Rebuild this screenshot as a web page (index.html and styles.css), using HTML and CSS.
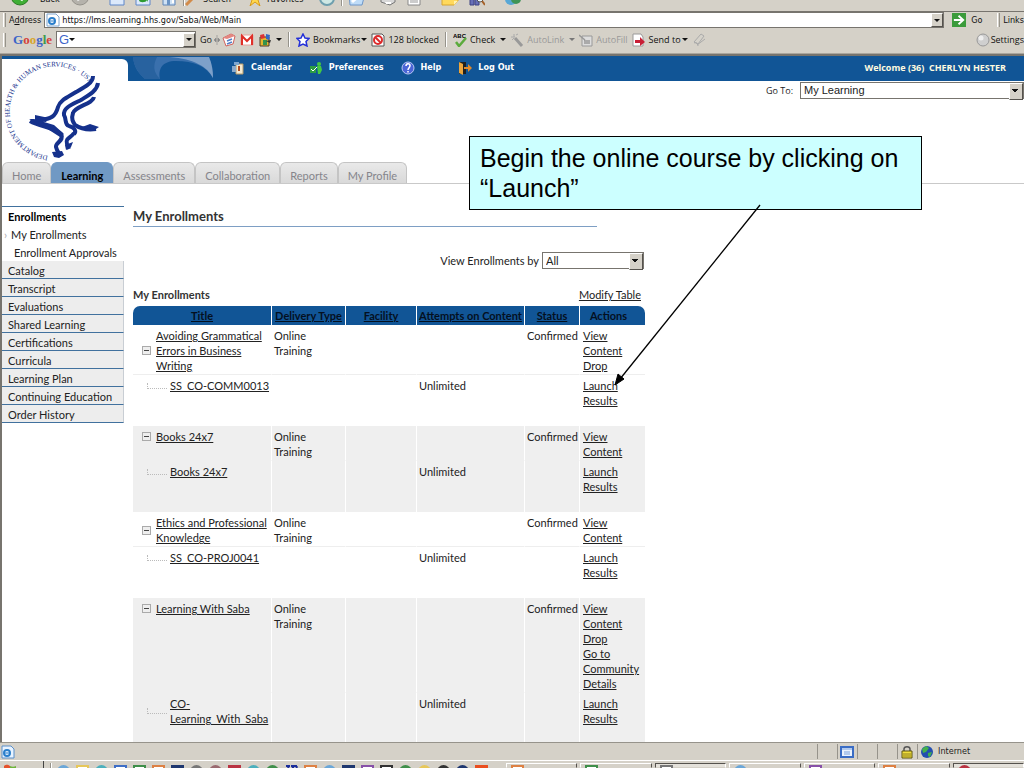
FILE: index.html
```html
<!DOCTYPE html>
<html lang="en">
<head>
  <meta charset="UTF-8">
  <meta name="viewport" content="width=device-width, initial-scale=1.0">
  <title>My Enrollments</title>
  <link rel="stylesheet" href="styles.css">
</head>
<body>

  <!-- browser toolbars -->
  <div class="chrome">
    <div class="std-bar">
      <svg class="big" viewBox="0 0 20 20"><circle cx="10" cy="10" r="9" fill="#3fae35" stroke="#2a7a24"/><path d="M13 6l-6 4 6 4" fill="none" stroke="#fff" stroke-width="3"/></svg>
      <span class="std-text back">Back</span>
      <svg class="big" viewBox="0 0 20 20"><circle cx="10" cy="10" r="9" fill="#b5b2ab" stroke="#96938c"/><path d="M7 6l6 4-6 4" fill="none" stroke="#eee" stroke-width="3"/></svg>
      <svg class="first" viewBox="0 0 16 16"><path d="M1 0h14v15H1z" fill="#dce9fb" stroke="#5f86c8"/><path d="M4 1l8 8m0-8l-8 8" stroke="#d33" stroke-width="2"/></svg>
      <svg viewBox="0 0 16 16"><path d="M1 0h14v15H1z" fill="#dce9fb" stroke="#5f86c8"/><path d="M4 10c0 3 7 3 8 0l1 2V7H8l2 2c-2 1-3 0-3-2H4z" fill="#2d9b32"/></svg>
      <svg viewBox="0 0 16 16"><path d="M2 6l6-5 6 5v9H2z" fill="#cfe2f5" stroke="#5f86b8"/><path d="M6 9h3v6H6z" fill="#6b94c4"/><path d="M11 8h2v5h-2z" fill="#fff"/></svg>
      <span class="sep"></span>
      <svg class="glass" viewBox="0 0 16 16"><circle cx="10" cy="5" r="4" fill="#d8ecfa" stroke="#7893ab"/><path d="M7 9l-6 6" stroke="#d28b4a" stroke-width="3"/></svg>
      <span class="std-text search">Search</span>
      <svg viewBox="0 0 16 16"><path d="M8 0l2 5 6 1-5 4 2 6-5-4-5 4 2-6-5-4 6-1z" fill="#ffd84d" stroke="#d79a1a"/></svg>
      <span class="std-text fav">Favorites</span>
      <svg viewBox="0 0 16 16"><circle cx="8" cy="8" r="7" fill="#cfe8e4" stroke="#6e9fae" stroke-width="2"/><path d="M8 3v6h4" fill="none" stroke="#2c7f3c" stroke-width="2"/></svg>
      <span class="sep"></span>
      <svg viewBox="0 0 16 16"><path d="M0 4h16L13 15H1z" fill="#bfdcf7" stroke="#6c96c9"/><path d="M3 12l9-8" stroke="#fff" stroke-width="3"/></svg>
      <svg class="wide-left" viewBox="0 0 16 16"><path d="M1 5h14v7l-5 3-9-3z" fill="#d8d8d8" stroke="#777"/><path d="M5 12h6v2H6z" fill="#fff"/></svg>
      <svg viewBox="0 0 16 16"><path d="M2 0h12v15H2z" fill="#fff" stroke="#888"/><path d="M4 10h8M4 12h8" stroke="#999"/></svg>
      <svg class="note" viewBox="0 0 18 16"><path d="M1 2h16v9l-4 4H1z" fill="#ffd95c" stroke="#d6a530"/><path d="M13 15v-4h4" fill="#fff2b0"/></svg>
      <svg viewBox="0 0 16 16"><path d="M1 1h4v14H1zM6 1h4v14H6z" fill="#6870b8" stroke="#3d4283"/><circle cx="11" cy="9" r="3" fill="#e4f2fa" stroke="#555"/><path d="M13 11l3 4" stroke="#a5622a" stroke-width="2"/></svg>
      <svg class="note" viewBox="0 0 16 16"><circle cx="6" cy="9" r="6" fill="#58a7d6"/><circle cx="11" cy="9" r="5" fill="#3f9457"/></svg>
    </div>

    <div class="address-bar">
      <span class="grip"></span>
      <label for="address">A<u>d</u>dress</label>
      <div class="address-box">
        <svg viewBox="0 0 14 14"><path d="M1 1h9l3 3v9H1z" fill="#fff" stroke="#7fa6cf"/><circle cx="6" cy="8" r="3" fill="none" stroke="#2b7fcb" stroke-width="2"/><path d="M3 8h6" stroke="#2b7fcb"/></svg>
        <input id="address" type="text" value="https://lms.learning.hhs.gov/Saba/Web/Main">
        <button class="drop" aria-label="Address history"></button>
      </div>
      <button class="go-btn">
        <svg viewBox="0 0 15 15"><path d="M0 0h15v15H0z" fill="#3b9b3b"/><path d="M2 7.500h9M7 3l5 4.500L7 12" fill="none" stroke="#fff" stroke-width="2"/></svg>
        Go
      </button>
      <span class="grip"></span>
      <span class="links">Links</span>
    </div>

    <div class="google-bar">
      <span class="grip"></span>
      <span class="google"><b class="g-blue">G</b><b class="g-red">o</b><b class="g-yellow">o</b><b class="g-blue">g</b><b class="g-green">l</b><b class="g-red">e</b></span>
      <div class="google-box">
        <span class="g-mark">G</span><span class="caret"></span>
        <input type="text" aria-label="Google search">
        <button class="drop" aria-label="Search history"></button>
      </div>
      <button class="tool">Go</button>
      <svg class="tiny" viewBox="0 0 6 10"><path d="M3 0v10M0 5l2-2v4zM6 5L4 3v4z" fill="#888" stroke="#888" stroke-width=".6"/></svg>
      <svg class="ic14" viewBox="0 0 14 14"><path d="M1 5l8-4 4 2-2 8-7 2z" fill="#fff" stroke="#d0605c"/><path d="M1 5l8-4 4 2-8 3z" fill="#e48680"/><path d="M5 8l5-2M5 11l5-2" stroke="#547fc4" stroke-width="1.500"/></svg>
      <svg class="ic14" viewBox="0 0 14 12"><path d="M1 1h12v10H1z" fill="#fff" stroke="#e8a09b"/><path d="M2 11V2l5 5 5-5v9" fill="none" stroke="#df2f28" stroke-width="2"/></svg>
      <svg class="ic14" viewBox="0 0 14 14"><path d="M2 4h9v9H2z" fill="#e7b62e" stroke="#4a3b26"/><path d="M2 2l4-1 1 4-4 1z" fill="#d33"/><path d="M8 1l4 1-1 5-3-1z" fill="#3568c5"/><path d="M5 7h4v5H5z" fill="#35934b"/><path d="M8 8l5-1-1 3z" fill="#333"/></svg>
      <span class="caret"></span>
      <span class="sep tall"></span>
      <button class="tool"><svg class="ic14" viewBox="0 0 14 14"><path d="M7 1l2 4 4 .500-3 3 1 4.500-4-2-4 2 1-4.500-3-3L5 5z" fill="#fff" stroke="#2430d8" stroke-width="1.500"/></svg>Bookmarks<i class="caret"></i></button>
      <button class="tool"><svg class="ic14" viewBox="0 0 14 14"><path d="M1 1h10l2 2v10H1z" fill="#fff" stroke="#555"/><circle cx="7" cy="7" r="4" fill="#fff" stroke="#dc2b2b" stroke-width="2"/><path d="M4 4l6 6" stroke="#dc2b2b" stroke-width="2"/></svg>128 blocked</button>
      <span class="sep tall"></span>
      <button class="tool"><svg class="ic14" viewBox="0 0 14 14"><text x="0" y="5" class="abc">ABC</text><path d="M3 9l3 4 7-8" fill="none" stroke="#5bab3d" stroke-width="2.500"/></svg>Check<i class="caret spaced"></i></button>
      <button class="tool off"><svg class="ic14" viewBox="0 0 14 14"><path d="M5 5l7 8" stroke="#999" stroke-width="3"/><path d="M1 4h4M4 1v3M2 7l2-2M6 2l2-1" stroke="#aaa"/></svg>AutoLink<i class="caret spaced"></i></button>
      <button class="tool off"><svg class="ic14" viewBox="0 0 14 14"><path d="M3 3h10v10H3z" fill="#ddd" stroke="#999"/><path d="M5 8h6M5 10h6M0 2l6 5" stroke="#999" stroke-width="1.500"/></svg>AutoFill</button>
      <button class="tool"><svg class="ic14" viewBox="0 0 14 14"><path d="M1 1h8l2 3v9H1z" fill="#fff" stroke="#999"/><path d="M3 7h5V4l5 5-5 4v-3H3z" fill="#c91f36"/></svg>Send to<i class="caret"></i></button>
      <svg class="ic14" viewBox="0 0 14 14"><path d="M2 9l7-8 3 2-6 8z" fill="#d5d2ca" stroke="#aaa"/><path d="M2 10c2-1 4 0 4 3M5 12l8-6" fill="none" stroke="#aaa"/></svg>
      <button class="tool settings"><svg class="ic14" viewBox="0 0 14 14"><circle cx="7" cy="7" r="6" fill="#cfcfcf" stroke="#999"/><circle cx="5" cy="5" r="2.500" fill="#eee"/></svg>Settings</button>
    </div>
  </div>

  <div class="page">
    <header class="masthead">
      <div class="logo">
        <svg viewBox="0 0 102 102" role="img" aria-label="Department of Health and Human Services USA">
          <path id="ring" d="M46 97A45 45 0 1 1 97 45" fill="none"/>
          <text class="ring-text"><textPath href="#ring">DEPARTMENT OF HEALTH &amp; HUMAN SERVICES · USA</textPath></text>
          <g fill="none" stroke="#15318c" stroke-width="4" stroke-linejoin="round">
            <path d="M91 17c0 7-8 11-17 16-8 5-16 8-18 15-2 8-6 14-23 12"/>
            <path d="M96 24c-1 8-9 12-17 17-10 5-18 8-17 15 3 5 0 9 5 11 5 1 8 5 5 8"/>
            <path d="M92 38c-1 7-19 9-21 16-2 6 0 9 2 12 6 4 14 5 21 4"/>
            <path d="M28 62c10 6 24 6 31 13 4 6-6 9-5 13 1 4 4 8 5 8"/>
            <path d="M72 74c-3 5-9 5-7 11l2 5"/>
          </g>
          <path d="M27 60l5 0 20 6 10 9-4 3-14-9zM33 56l14 3-3 4-11-1zM50 93l10-1 2 4-5 3-5-1zM80 68l8-3 9 3-6 4zM63 86l8-3-2 5-5 3z" fill="#15318c"/>
        </svg>
      </div>
      <div class="head-right">
        <nav class="top-nav">
          <svg class="swoosh" viewBox="0 0 86 22"><path d="M5 0h76c3 7 4 14 4 21C78 9 66 4 48 4 34 4 30 12 32 22H17C8 14 6 8 5 0z" fill="#3a70ad"/><path d="M42 0h39c3 7 4 14 4 21C80 10 66 2 42 0z" fill="#7da0c9"/><path d="M5 0h24c-4 8-4 15 3 22H17C8 14 6 8 5 0z" fill="#28629f"/></svg>
          <a href="#"><svg viewBox="0 0 14 14"><path d="M5 3h7v10H5z" fill="#f4ead2" stroke="#b59a68"/><path d="M1 5h4v6H1z" fill="#8aa9ca"/><path d="M3 1h5v3H3z" fill="#7ea6cf"/><path d="M8 5v5" stroke="#b34d20" stroke-width="2"/></svg>Calendar</a>
          <a href="#"><svg viewBox="0 0 14 14"><circle cx="10" cy="3" r="2" fill="#43c943"/><path d="M8 5h4l1 4-2 4H9z" fill="#43c943"/><path d="M1 5h6v7H1z" fill="#2d9d44"/><path d="M2 8l2 2 4-4" fill="none" stroke="#fff"/></svg>Preferences</a>
          <a href="#"><svg viewBox="0 0 14 14"><circle cx="7" cy="7" r="6" fill="#4b65d6" stroke="#b9c8f3"/><path d="M5 5c0-3 4-3 4-.500S7 7 7 9M7 10v1.500" fill="none" stroke="#fff" stroke-width="1.500"/></svg>Help</a>
          <a href="#"><svg viewBox="0 0 14 14"><path d="M1 1h7v12H1z" fill="#202020"/><path d="M1 1l4 2v11l-4-2z" fill="#eba63e"/><path d="M6 6h4V3l4 4-4 4V8H6z" fill="#e08a2b"/></svg>Log Out</a>
          <span class="welcome">Welcome (36)&nbsp; CHERLYN HESTER</span>
        </nav>
        <div class="goto">
          <label for="goto">Go To:</label>
          <div class="select-box goto-box"><select id="goto"><option>My Learning</option></select></div>
        </div>
      </div>
    </header>

    <nav class="tabs">
      <a href="#">Home</a>
      <a href="#" class="active">Learning</a>
      <a href="#">Assessments</a>
      <a href="#">Collaboration</a>
      <a href="#">Reports</a>
      <a href="#">My Profile</a>
    </nav>

    <div class="content">
      <nav class="side-nav">
        <a href="#" class="current">Enrollments</a>
        <a href="#" class="sub on">My Enrollments</a>
        <a href="#" class="sub">Enrollment Approvals</a>
        <a href="#" class="item">Catalog</a>
        <a href="#" class="item">Transcript</a>
        <a href="#" class="item">Evaluations</a>
        <a href="#" class="item">Shared Learning</a>
        <a href="#" class="item">Certifications</a>
        <a href="#" class="item">Curricula</a>
        <a href="#" class="item">Learning Plan</a>
        <a href="#" class="item">Continuing Education</a>
        <a href="#" class="item">Order History</a>
      </nav>

      <main class="main">
        <h1>My Enrollments</h1>
        <div class="filter">
          <label for="viewBy">View Enrollments by</label>
          <div class="select-box filter-box"><select id="viewBy"><option>All</option></select></div>
        </div>
        <div class="table-head">
          <h2>My Enrollments</h2>
          <a href="#">Modify Table</a>
        </div>
        <table class="enrollments">
          <colgroup><col class="c-title"><col class="c-type"><col class="c-fac"><col class="c-att"><col class="c-status"><col class="c-act"></colgroup>
          <thead>
            <tr>
              <th><a href="#">Title</a></th>
              <th><a href="#">Delivery Type</a></th>
              <th><a href="#">Facility</a></th>
              <th><a href="#">Attempts on Content</a></th>
              <th><a href="#">Status</a></th>
              <th>Actions</th>
            </tr>
          </thead>
          <tbody>
            <tr class="course">
              <td><div class="title"><button class="minus" aria-label="Collapse"></button><a href="#">Avoiding Grammatical Errors in Business Writing</a></div></td>
              <td>Online Training</td><td></td><td></td><td>Confirmed</td>
              <td><a href="#">View Content</a><br><a href="#">Drop</a></td>
            </tr>
            <tr class="part">
              <td><div class="title"><i class="branch"></i><a href="#">SS_CO-COMM0013</a></div></td>
              <td></td><td></td><td>Unlimited</td><td></td>
              <td><a href="#">Launch</a><br><a href="#">Results</a></td>
            </tr>
          </tbody>
          <tbody class="shade">
            <tr class="course">
              <td><div class="title"><button class="minus" aria-label="Collapse"></button><a href="#">Books 24x7</a></div></td>
              <td>Online Training</td><td></td><td></td><td>Confirmed</td>
              <td><a href="#">View Content</a></td>
            </tr>
            <tr class="part">
              <td><div class="title"><i class="branch"></i><a href="#">Books 24x7</a></div></td>
              <td></td><td></td><td>Unlimited</td><td></td>
              <td><a href="#">Launch</a><br><a href="#">Results</a></td>
            </tr>
          </tbody>
          <tbody>
            <tr class="course">
              <td><div class="title"><button class="minus" aria-label="Collapse"></button><a href="#">Ethics and Professional Knowledge</a></div></td>
              <td>Online Training</td><td></td><td></td><td>Confirmed</td>
              <td><a href="#">View Content</a></td>
            </tr>
            <tr class="part">
              <td><div class="title"><i class="branch"></i><a href="#">SS_CO-PROJ0041</a></div></td>
              <td></td><td></td><td>Unlimited</td><td></td>
              <td><a href="#">Launch</a><br><a href="#">Results</a></td>
            </tr>
          </tbody>
          <tbody class="shade">
            <tr class="course">
              <td><div class="title"><button class="minus" aria-label="Collapse"></button><a href="#">Learning With Saba</a></div></td>
              <td>Online Training</td><td></td><td></td><td>Confirmed</td>
              <td><a href="#">View Content</a><br><a href="#">Drop</a><br><a href="#">Go to Community Details</a></td>
            </tr>
            <tr class="part">
              <td><div class="title"><i class="branch"></i><a href="#">CO-<br>Learning_With_Saba</a></div></td>
              <td></td><td></td><td>Unlimited</td><td></td>
              <td><a href="#">Launch</a><br><a href="#">Results</a></td>
            </tr>
          </tbody>
        </table>
      </main>
    </div>
  </div>

  <div class="status-bar">
    <svg viewBox="0 0 14 14"><path d="M1 1h9l3 3v9H1z" fill="#e8f3ff" stroke="#5b8fc9"/><circle cx="6" cy="8" r="3" fill="none" stroke="#2b7fcb" stroke-width="2"/><path d="M3 8h6" stroke="#2b7fcb"/></svg>
    <span class="cell push"></span>
    <span class="cell"><svg viewBox="0 0 14 14"><path d="M1 2h12v10H1z" fill="#eaf2fd" stroke="#3a6cc4" stroke-width="2"/><path d="M2 4h10M4 7h6M4 9h6" stroke="#79a0dd"/></svg></span>
    <span class="cell"></span>
    <span class="cell"></span>
    <span class="cell"><svg viewBox="0 0 14 14"><path d="M4 7V4c0-3 6-3 6 0v3" fill="none" stroke="#555" stroke-width="1.500"/><path d="M2 6h10v7H2z" fill="#f1df3c" stroke="#5d5410"/><path d="M3 9h8M3 11h8" stroke="#8d7e1c"/></svg></span>
    <span class="cell zone"><svg viewBox="0 0 14 14"><circle cx="7" cy="7" r="6" fill="#234eb0"/><path d="M2 4l4-3 3 2-3 4-3 1zM8 8l4-1-2 5-2-1z" fill="#43b04c"/></svg>Internet</span>
  </div>

  <div class="taskbar">
    <div class="start"><svg viewBox="0 0 14 8"><path d="M1 3c3-2 4-1 6 0v5H1z" fill="#e5522c"/><path d="M7 3c2 1 4 1 6 0v5H7z" fill="#6eb43a"/></svg></div>
    <span class="sep"></span>
    <div class="quick">
      <i class="ball sky"></i><i class="frame yellow"></i><i class="ball cyan"></i><i class="frame blue"></i><i class="frame green"></i><i class="frame orange"></i><i class="solid navy"></i><i class="ball grey"></i><i class="ball maroon"></i><i class="solid red"></i><i class="ball cyan"></i><i class="ball green"></i><svg class="word" viewBox="0 0 13 13"><path d="M1 1h4M6 1h6M3 1l2 9 3-8 2 8 2-9" fill="none" stroke="#1b2e9b" stroke-width="2"/></svg><i class="frame orange"></i><i class="ball sky"></i><i class="solid navy"></i><i class="frame purple"></i><i class="frame black"></i><i class="ball green"></i><i class="ball yellow"></i><i class="ball black"></i><i class="ball navy"></i><i class="solid flame"></i>
    </div>
    <div class="tasks">
      <button aria-label="Outlook"><i class="frame orange"></i></button>
      <button aria-label="Excel"><i class="frame green"></i></button>
      <button class="pressed" aria-label="Browser"><i class="frame grey"></i></button>
      <button aria-label="Messenger"><i class="ball sky"></i></button>
      <button aria-label="Notes"><i class="frame purple"></i></button>
      <button aria-label="PowerPoint"><i class="frame orange"></i></button>
      <button class="pressed" aria-label="Tray"><i class="ball red"></i></button>
    </div>
  </div>

  <!-- training callout over the page -->
  <div class="callout">Begin the online course by clicking on “Launch”</div>
  <svg class="arrow" viewBox="0 0 150 184"><path d="M147 2L7 176" stroke="#000" stroke-width="1.300"/><path d="M2 182l3-11 6 5z" fill="#000" stroke="#000"/></svg>

</body>
</html>
```

FILE: styles.css
```css
* {
  box-sizing: border-box;
}
body {
  margin: 0;
  height: 100vh;
  display: flex;
  flex-direction: column;
  overflow: hidden;
  position: relative;
  background: #fff;
  color: #222;
  font-family: Lato, "Open Sans", sans-serif;
  font-size: 11px;
  line-height: 15px;
}
a {
  color: inherit;
}
button, input, select {
  font: inherit;
  color: inherit;
  margin: 0;
  padding: 0;
  border: 0;
  background: none;
}
svg {
  display: block;
  flex: none;
}

/* browser toolbars */
.chrome {
  flex: none;
  background: #d5d1c8;
  color: #111;
  font-family: "DejaVu Sans Condensed", "DejaVu Sans", sans-serif;
  font-size: 9px;
  line-height: 14px;
  border-bottom: 2px solid #77746e;
}
.std-bar {
  display: flex;
  align-items: flex-end;
  height: 12px;
  padding: 0 0 5px 10px;
  gap: 10px;
  overflow: hidden;
  border-bottom: 1px solid #77746e;
}
.std-bar svg {
  width: 16px;
  height: 16px;
}
.std-bar .big {
  width: 20px;
  height: 20px;
}
.std-text {
  height: 10px;
  line-height: 6px;
}
.back {
  width: 20px;
}
.first {
  margin-left: 9px;
}
.glass, .std-bar .fav {
  margin-left: -6px;
}
.std-bar .search {
  width: 34px;
  margin-left: -8px;
}
.fav {
  width: 42px;
}
.wide-left {
  margin-left: 5px;
}
.std-bar .note {
  width: 18px;
  margin-left: 9px;
}
.sep {
  width: 2px;
  height: 12px;
  border-left: 1px solid #96938b;
  border-right: 1px solid #fff;
  flex: none;
}
.std-bar .sep {
  margin: 0 -4px;
}
.tall {
  height: 15px;
  margin: 0 2px;
}
.grip {
  width: 3px;
  height: 14px;
  border-left: 1px solid #fff;
  border-right: 1px solid #96938b;
  flex: none;
}
.address-bar {
  display: flex;
  align-items: center;
  height: 16px;
  padding-left: 3px;
  gap: 3px;
}
.address-box {
  flex: 1;
  display: flex;
  align-items: center;
  height: 16px;
  background: #fff;
  border: 1px solid #77746e;
}
.address-box svg {
  width: 14px;
  height: 14px;
  margin: 0 2px 0 1px;
}
.address-box input, .google-box input {
  flex: 1;
  min-width: 0;
  height: 14px;
}
.drop {
  width: 12px;
  height: 14px;
  background: #d5d1c8;
  border: 1px solid;
  border-color: #fff #55524d #55524d #fff;
  display: flex;
  align-items: center;
  justify-content: center;
}
.drop::after, .caret {
  content: "";
  width: 0;
  height: 0;
  border: 3px solid transparent;
  border-top-color: #111;
  border-bottom: 0;
  flex: none;
}
.go-btn {
  display: flex;
  align-items: center;
  gap: 5px;
  width: 42px;
  margin-left: 5px;
}
.go-btn svg {
  width: 14px;
  height: 14px;
}
.google-bar {
  display: flex;
  align-items: center;
  height: 26px;
  padding: 0 0 2px 3px;
  gap: 4px;
  border-bottom: 1px solid #aaa69e;
  font-family: "Open Sans", sans-serif;
  white-space: nowrap;
}
.google {
  width: 42px;
  margin-left: 3px;
  font-family: "Liberation Serif", serif;
  font-size: 13px;
}
.g-blue { color: #3d65c8; }
.g-red { color: #d5413a; }
.g-yellow { color: #d7a52a; }
.g-green { color: #3d9b4d; }
.google-box {
  display: flex;
  align-items: center;
  width: 140px;
  height: 17px;
  margin-left: -3px;
  padding-left: 2px;
  background: #fff;
  border: 1px solid #77746e;
}
.g-mark {
  color: #3d65c8;
  font-size: 13px;
  font-family: "Liberation Sans", sans-serif;
}
.tiny {
  width: 6px;
  height: 10px;
  margin: 0 -2px;
}
.ic14 {
  width: 14px;
  height: 14px;
}
.tool {
  display: flex;
  align-items: center;
  gap: 3px;
}
.tool .caret {
  margin-left: -2px;
}
.tool .spaced {
  margin-left: 2px;
}
.abc {
  font: bold 6px "Liberation Sans", sans-serif;
}
.off {
  color: #999;
}
.off .caret {
  border-top-color: #777;
}
.settings {
  gap: 1px;
  margin-left: auto;
}

/* masthead */
.page {
  flex: 1;
  min-height: 0;
  overflow: hidden;
  border-left: 2px solid #77746e;
}
.masthead {
  display: flex;
  height: 106px;
  background: linear-gradient(#115596 25px, #fff 25px);
}
.logo {
  width: 126px;
  margin-top: 3px;
  background: #fff;
  border-top-right-radius: 6px;
}
.logo svg {
  width: 102px;
  height: 102px;
}
.ring-text {
  font: 7px "Liberation Serif", serif;
  fill: #15318c;
}
.head-right {
  flex: 1;
}
.top-nav {
  display: flex;
  align-items: center;
  height: 23px;
  padding-right: 18px;
  gap: 17px;
  color: #fff;
  font-family: "DejaVu Sans Condensed", "DejaVu Sans", sans-serif;
  font-size: 9px;
  font-weight: bold;
}
.top-nav a {
  display: flex;
  align-items: center;
  gap: 6px;
  text-decoration: none;
}
.top-nav svg {
  width: 14px;
  height: 14px;
}
.top-nav .swoosh {
  width: 86px;
  height: 22px;
}
.welcome {
  margin-left: auto;
  color: #fffbe0;
  font-family: "Open Sans", sans-serif;
}
.goto {
  display: flex;
  align-items: center;
  justify-content: flex-end;
  gap: 7px;
  height: 22px;
  font-family: "Open Sans", sans-serif;
  font-size: 9px;
}
.select-box {
  display: flex;
  align-items: center;
  position: relative;
  height: 17px;
  background: #fff;
  border: 1px solid #77746e;
}
.select-box select {
  appearance: none;
  width: 100%;
  height: 15px;
  padding-left: 3px;
  font-size: 11px;
}
.select-box::after {
  content: "";
  position: absolute;
  right: 0;
  top: 0;
  width: 12px;
  height: 15px;
  border: 1px solid;
  border-color: #fff #55524d #55524d #fff;
  background: linear-gradient(#111, #111) 2px 5px / 6px 1px no-repeat, linear-gradient(#111, #111) 3px 6px / 4px 1px no-repeat, linear-gradient(#111, #111) 4px 7px / 2px 1px no-repeat, #d5d1c8;
  pointer-events: none;
}
.goto-box {
  width: 224px;
  font-family: "Liberation Sans", sans-serif;
}

/* tabs */
.tabs {
  display: flex;
  height: 22px;
  border-bottom: 1px solid #c9c9c9;
}
.tabs a {
  padding: 5px 9px 0;
  border: 1px solid #c4c4c4;
  border-bottom: 0;
  border-radius: 6px 6px 0 0;
  background: linear-gradient(#e9e9e9, #d9d9d9);
  color: #85858b;
  text-decoration: none;
}
.tabs .active {
  background: #7099c4;
  border-color: #7099c4;
  color: #000;
  font-weight: bold;
}

/* page body */
.content {
  display: flex;
  align-items: flex-start;
  padding-top: 22px;
}
.side-nav {
  width: 122px;
  flex: none;
  border-top: 1px solid #41719e;
}
.side-nav a {
  display: block;
  height: 18px;
  padding: 2px 0 0 6px;
  text-decoration: none;
  white-space: nowrap;
}
.side-nav .current {
  font-weight: bold;
  color: #000;
}
.side-nav .sub {
  padding-left: 12px;
}
.side-nav .on {
  padding-left: 2px;
}
.on::before {
  content: "›";
  color: #aaa;
  margin-right: 4px;
}
.side-nav .item {
  background: #ededed;
  border-right: 1px solid #c9ced4;
  border-bottom: 1px solid #41719e;
}
.main {
  width: 512px;
  margin-left: 9px;
}
h1, h2 {
  margin: 0;
  font-size: 13px;
  line-height: 15px;
  color: #333;
}
h1 {
  width: 464px;
  height: 21px;
  padding-top: 3px;
  border-bottom: 1px solid #7e9fc4;
}
h2 {
  font-size: 11px;
}
.filter {
  display: flex;
  justify-content: flex-end;
  align-items: center;
  gap: 3px;
  height: 17px;
  margin-top: 25px;
  padding-right: 1px;
}
.filter-box {
  width: 102px;
}
.table-head {
  display: flex;
  justify-content: space-between;
  margin-top: 18px;
  padding-right: 4px;
}
.enrollments {
  width: 100%;
  margin-top: 4px;
  border-collapse: separate;
  border-spacing: 0;
  table-layout: fixed;
}
.c-title { width: 139px; }
.c-type { width: 74px; }
.c-fac { width: 71px; }
.c-att { width: 108px; }
.c-status { width: 55px; }
.c-act { width: 65px; }
.enrollments th {
  height: 19px;
  padding: 0;
  background: #115596;
  color: #04101f;
  white-space: nowrap;
}
.enrollments th:first-child {
  border-top-left-radius: 7px;
}
.enrollments th:last-child {
  border-top-right-radius: 7px;
  padding-right: 8px;
}
.enrollments th, .enrollments td {
  border-right: 1px solid #fff;
}
.enrollments tr > :last-child {
  border-right: 0;
}
.enrollments td {
  padding: 3px 2px 1px;
  vertical-align: top;
}
.enrollments td:last-child {
  padding-left: 3px;
  padding-right: 8px;
}
.enrollments .course td {
  border-bottom: 1px solid #eee;
}
.enrollments .part td {
  padding-bottom: 18px;
}
.enrollments .shade td {
  border-bottom-color: #efefef;
}
.shade {
  background: #efefef;
}
.title {
  display: flex;
  align-items: center;
  margin-right: -2px;
  padding-left: 7px;
}
.minus {
  width: 9px;
  height: 9px;
  margin-right: 5px;
  border: 1px solid #aaa;
  background: linear-gradient(#444, #444) center / 5px 1px no-repeat #eee;
  flex: none;
}
.branch {
  width: 20px;
  height: 6px;
  margin: 0 3px 0 5px;
  border: 1px dotted #bbb;
  border-width: 0 0 1px 1px;
  flex: none;
}

/* status bar and taskbar */
.status-bar {
  flex: none;
  display: flex;
  align-items: center;
  height: 18px;
  padding: 0 1px;
  background: #d5d1c8;
  border-top: 1px solid #96938b;
  font-family: "DejaVu Sans Condensed", "DejaVu Sans", sans-serif;
  font-size: 9px;
}
.status-bar svg {
  width: 14px;
  height: 14px;
}
.cell {
  display: flex;
  align-items: center;
  gap: 4px;
  width: 20px;
  height: 15px;
  padding-left: 2px;
  border-left: 1px solid #96938b;
}
.push {
  margin-left: auto;
}
.zone {
  width: 106px;
}
.taskbar {
  flex: none;
  display: flex;
  height: 8px;
  overflow: hidden;
  background: #d5d1c8;
  border-top: 1px solid #fff;
}
.start {
  width: 44px;
  padding: 2px 0 0 3px;
  border-right: 1px solid #444;
}
.start svg {
  width: 14px;
  height: 8px;
}
.taskbar .sep {
  margin: 2px 5px 0 6px;
}
.quick {
  display: flex;
  gap: 6px;
  padding-top: 4px;
}
.taskbar i, .word {
  width: 13px;
  height: 13px;
  flex: none;
  color: #777;
}
.ball {
  border-radius: 7px;
  background: currentColor;
}
.frame {
  border: 2px solid;
  background: #fff;
}
.solid {
  background: currentColor;
}
.taskbar .sky { color: #6ba7d8; }
.taskbar .cyan { color: #4cb0bd; }
.taskbar .blue { color: #3f6fc6; }
.taskbar .green { color: #3f8f4a; }
.taskbar .yellow { color: #e6c75a; }
.taskbar .orange { color: #dd8144; }
.taskbar .navy { color: #1e376f; }
.taskbar .maroon { color: #9a6a70; }
.taskbar .red { color: #b93342; }
.taskbar .purple { color: #8751a8; }
.taskbar .black { color: #333; }
.taskbar .flame { color: #ea4e1f; }
.tasks {
  flex: 1;
  display: flex;
  gap: 3px;
  padding: 2px 0 0 18px;
}
.tasks button {
  display: flex;
  flex: 1;
  padding: 1px 0 0 4px;
  border: 1px solid;
  border-color: #fff #55524d #d5d1c8 #fff;
}
.tasks .pressed {
  background: #e4e1da;
  border-color: #55524d #fff #d5d1c8 #55524d;
}

/* callout */
.callout {
  position: absolute;
  left: 469px;
  top: 136px;
  width: 453px;
  padding: 6px 10px;
  background: #cff;
  border: 1px solid #000;
  color: #000;
  font-family: "Liberation Sans", Arial, sans-serif;
  font-size: 25px;
  line-height: 30px;
}
.arrow {
  position: absolute;
  left: 613px;
  top: 203px;
  width: 150px;
  height: 184px;
}
```
